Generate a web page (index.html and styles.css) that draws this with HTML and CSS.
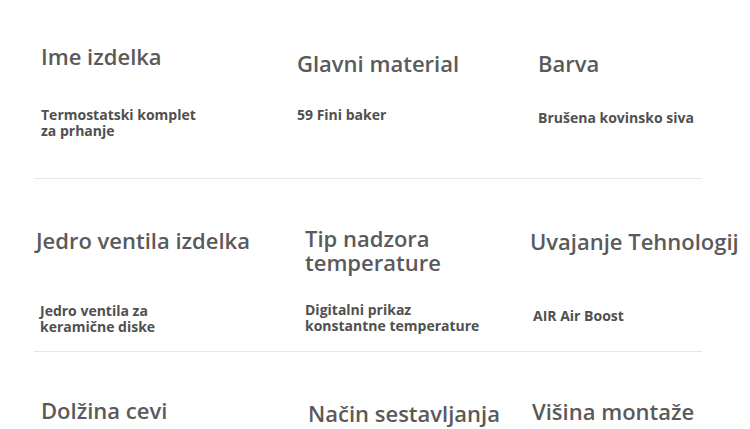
FILE: index.html
```html
<!DOCTYPE html>
<html lang="sl">
<head>
<meta charset="utf-8">
<title>Specifikacije</title>
<link rel="stylesheet" href="styles.css">
</head>
<body>
<main class="specs">
  <section class="row row-1">
    <div class="cell r1c1"><h3 class="label">Ime izdelka</h3><p class="value v-r1c1">Termostatski komplet<br>za prhanje</p></div>
    <div class="cell r1c2"><h3 class="label">Glavni material</h3><p class="value v-r1c2">59 Fini baker</p></div>
    <div class="cell r1c3"><h3 class="label">Barva</h3><p class="value v-r1c3">Brušena kovinsko siva</p></div>
  </section>
  <section class="row row-2">
    <div class="cell r2c1"><h3 class="label">Jedro ventila izdelka</h3><p class="value v-r2c1">Jedro ventila za<br>keramične diske</p></div>
    <div class="cell r2c2"><h3 class="label">Tip nadzora<br>temperature</h3><p class="value v-r2c2">Digitalni prikaz<br>konstantne temperature</p></div>
    <div class="cell r2c3"><h3 class="label">Uvajanje Tehnologij</h3><p class="value v-r2c3">AIR Air Boost</p></div>
  </section>
  <section class="row row-3">
    <div class="cell r3c1"><h3 class="label">Dolžina cevi</h3></div>
    <div class="cell r3c2"><h3 class="label">Način sestavljanja</h3></div>
    <div class="cell r3c3"><h3 class="label">Višina montaže</h3></div>
  </section>
</main>
</body>
</html>
```

FILE: styles.css
```css
html, body {
  margin: 0;
  padding: 0;
  background: #ffffff;
  overflow: hidden;
}
body {
  width: 750px;
  height: 429px;
  font-family: "Open Sans", "Noto Sans", sans-serif;
}
.specs {
  display: flex;
  flex-direction: column;
}
.row {
  display: grid;
  grid-template-columns: 297px 241px 212px;
  align-items: start;
}
.row-1, .row-2 {
  border-bottom: 1px solid #e6e6e6;
  margin-left: 34px;
  margin-right: 48px;
  grid-template-columns: 263px 241px 164px;
}
.row-1 { height: 178px; }
.row-2 { height: 172px; }
.row-3 { height: 77px; }

.cell {
  display: flex;
  flex-direction: column;
  min-width: 0;
  white-space: nowrap;
}
.label {
  margin: 0;
  font-size: 22px;
  line-height: 24px;
  font-weight: 600;
  color: #5a5a5a;
}
.value {
  margin: 0;
  font-size: 14px;
  line-height: 16px;
  font-weight: 700;
  color: #505050;
}

/* row 1 */
.r1c1 { padding: 44px 0 0 7px; }
.r1c2 { padding: 51px 0 0 0; }
.r1c3 { padding: 51px 0 0 0; }
.v-r1c1 { margin-top: 39px; }
.v-r1c2 { margin-top: 32px; }
.v-r1c3 { margin-top: 35px; }

/* row 2 */
.r2c1 { padding: 49px 0 0 2px; }
.r2c2 { padding: 47px 0 0 8px; }
.r2c3 { padding-top: 50px; margin-left: -8px; }
.v-r2c1 { margin-top: 51px; padding-left: 4px; }
.v-r2c2 { margin-top: 28px; }
.v-r2c3 { margin-top: 55px; padding-left: 3px; }

/* row 3 */
.r3c1 { padding: 46px 0 0 41px; }
.r3c2 { padding: 49px 0 0 11px; }
.r3c3 { padding-top: 47px; margin-left: -6px; }
```
